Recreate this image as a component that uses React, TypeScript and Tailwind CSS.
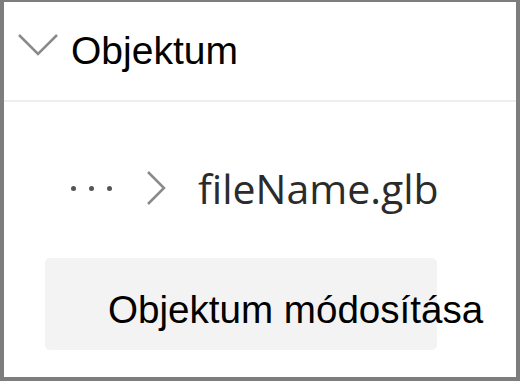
export default function App() {
  return (
    <div className="w-[520px] h-[381px] bg-white border-l-[4px] border-t-[2px] border-r-[4px] border-b-[4px] border-[#7d7d7d] flex flex-col overflow-hidden">
      {/* Header */}
      <div className="h-[100px] shrink-0 flex items-start border-b-2 border-[#eeeeee]">
        <svg width="42" height="24" viewBox="0 0 42 24" className="ml-[13px] mt-[31px]">
          <path d="M2 2 L21 21 L40 2" fill="none" stroke="#8a8a8a" strokeWidth="2.5" />
        </svg>
        <span className="ml-[12px] mt-[25px] text-[39px] leading-[48px] text-black font-['Liberation_Sans',sans-serif]">
          Objektum
        </span>
      </div>

      {/* Breadcrumb */}
      <div className="flex items-center h-[36px] mt-[68px] pl-[67px] shrink-0">
        <div className="flex gap-[13px] items-center">
          <span className="w-[5px] h-[5px] rounded-full bg-[#555555]" />
          <span className="w-[5px] h-[5px] rounded-full bg-[#555555]" />
          <span className="w-[5px] h-[5px] rounded-full bg-[#555555]" />
        </div>
        <svg width="22" height="36" viewBox="0 0 22 36" className="ml-[33px]">
          <path d="M3 2 L19 18 L3 34" fill="none" stroke="#8a8a8a" strokeWidth="2.5" />
        </svg>
        <span className="ml-[31px] text-[41px] leading-[48px] text-[#2b2b2b] font-['Open_Sans',sans-serif]">
          fileName.glb
        </span>
      </div>

      {/* Action */}
      <div className="pl-[41px] mt-[52px] shrink-0">
        <div className="w-[392px] h-[92px] rounded-[5px] bg-[#f3f3f3] flex items-start pt-[28px] pl-[63px]">
          <span className="whitespace-nowrap text-[38.6px] leading-[48px] text-black font-['Liberation_Sans',sans-serif]">
            Objektum módosítása
          </span>
        </div>
      </div>
    </div>
  );
}
